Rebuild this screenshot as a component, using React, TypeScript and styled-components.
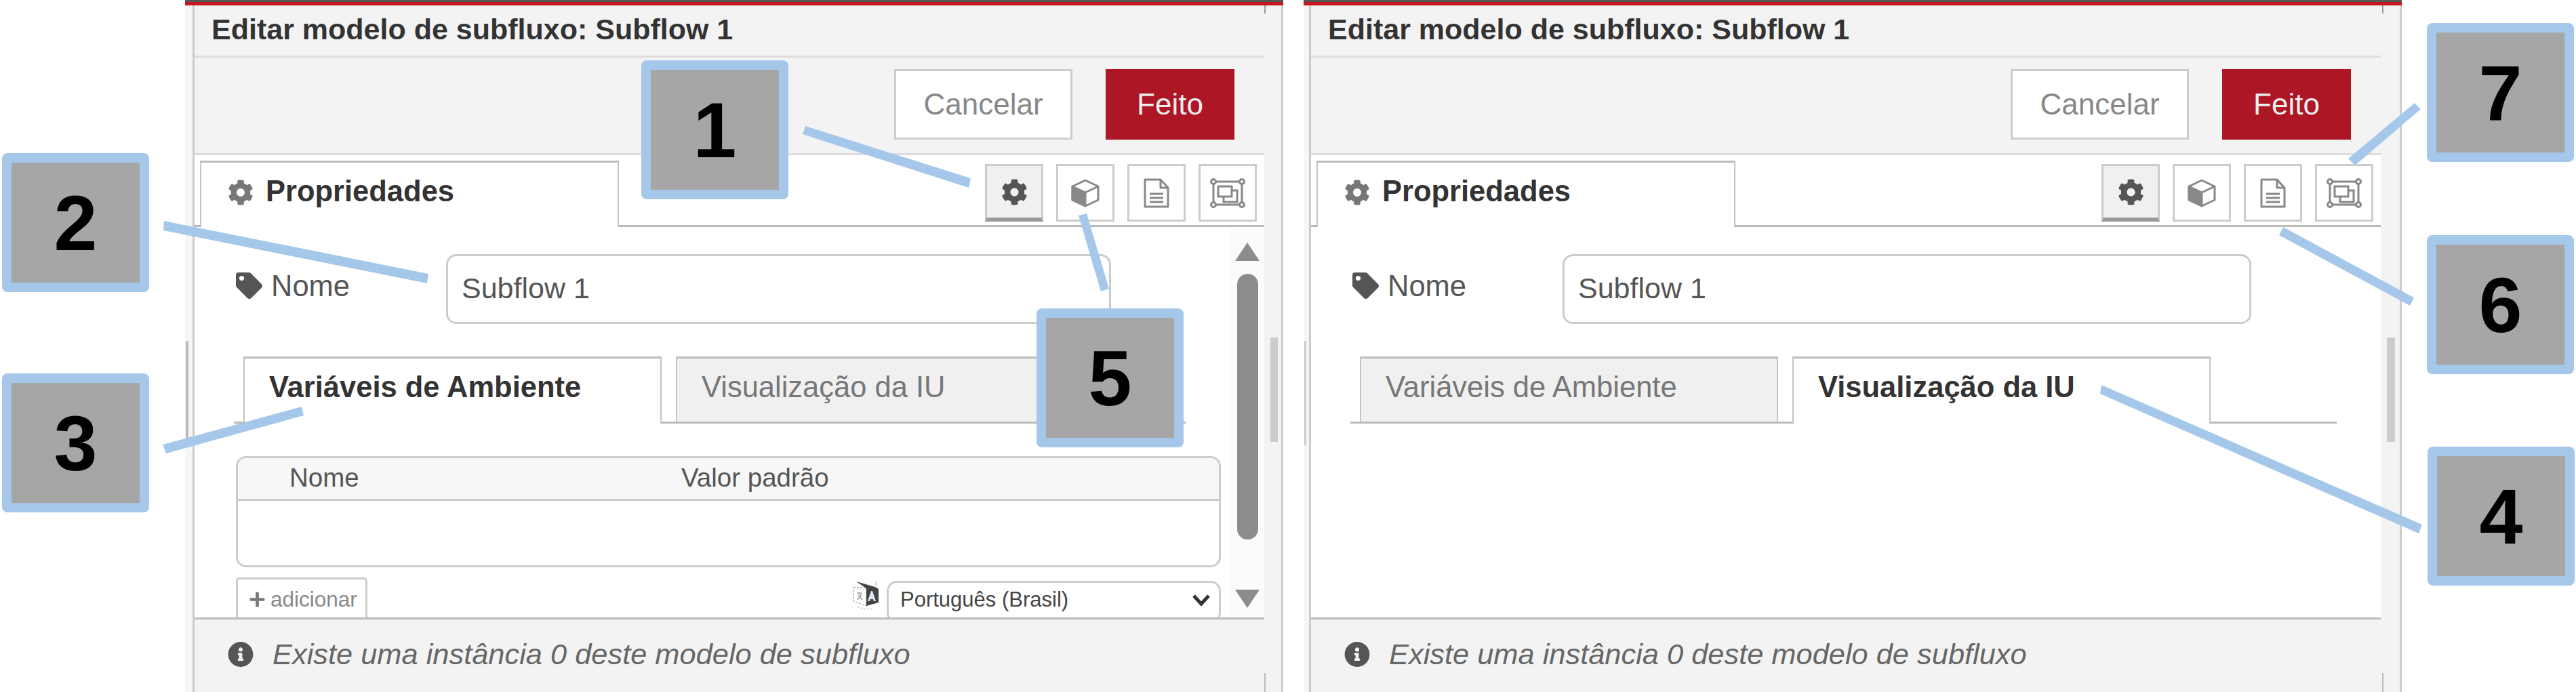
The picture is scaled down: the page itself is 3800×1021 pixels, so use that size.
import React from 'react';
import styled, { createGlobalStyle } from 'styled-components';
import { FaCog, FaTag, FaInfoCircle, FaPlus } from 'react-icons/fa';

const Global = createGlobalStyle`
  html, body { margin: 0; padding: 0; background: #fff; }
  body { font-family: "Liberation Sans", Arial, sans-serif; }
`;

const Page = styled.div`
  position: relative;
  width: 3800px;
  height: 1021px;
  overflow: hidden;
  background: #fff;
  display: flex;
  gap: 30px;
  padding-left: 273px;
  box-sizing: border-box;
`;

const Panel = styled.section`
  width: 1620px;
  height: 1021px;
  display: flex;
  flex-direction: column;
  flex: none;
`;

const TopBar = styled.div`
  height: 8px;
  flex: none;
  background: linear-gradient(#555 0 3px, #c4161c 3px 8px);
`;

const PanelBody = styled.div`
  flex: 1;
  display: flex;
  min-height: 0;
  background: #f3f3f3;
  border-right: 3px solid #ccc;
`;

const Gutter = styled.div<{ $w: number }>`
  width: ${p => p.$w}px;
  flex: none;
  box-sizing: border-box;
  background: #f6f6f6;
  border-right: 3px solid #ccc;
`;

const Main = styled.div`
  width: 1578px;
  flex: none;
  display: flex;
  flex-direction: column;
`;

const TitleBar = styled.div`
  height: 77px;
  box-sizing: border-box;
  border-bottom: 3px solid #ddd;
  padding: 10px 0 0 25px;
  font-size: 43px;
  font-weight: 700;
  line-height: 50px;
  color: #333;
  white-space: nowrap;
`;

const ButtonBar = styled.div`
  height: 144px;
  box-sizing: border-box;
  border-bottom: 3px solid #ddd;
  padding: 17px 44px 0 0;
  display: flex;
  justify-content: flex-end;
  align-items: flex-start;
  gap: 49px;
`;

const ActionButton = styled.div<{ $primary?: boolean }>`
  width: ${p => (p.$primary ? 190 : 263)}px;
  height: 104px;
  box-sizing: border-box;
  border: 3px solid ${p => (p.$primary ? '#ad1625' : '#ccc')};
  background: ${p => (p.$primary ? '#ad1625' : '#fff')};
  color: ${p => (p.$primary ? '#eee' : '#888')};
  font-size: 44px;
  display: flex;
  align-items: center;
  justify-content: center;
`;

const TabBar = styled.div`
  height: 106px;
  box-sizing: border-box;
  border-bottom: 3px solid #bbb;
  background: #fff;
  padding: 8px 11px 0 8px;
  display: flex;
  justify-content: space-between;
  align-items: flex-start;
`;

const MainTab = styled.div`
  width: 618px;
  height: 98px;
  box-sizing: border-box;
  border: 2px solid #c4c4c4;
  border-top: 3px solid #bbb;
  border-bottom: none;
  background: #fff;
  padding: 23px 0 0 39px;
  display: flex;
  align-items: flex-start;
  gap: 18px;
  font-size: 43.5px;
  line-height: 38px;
  font-weight: 700;
  color: #333;
  svg { color: #777; width: 38px; height: 38px; flex: none; margin-top: 2px; }
`;

const IconTabs = styled.div`
  display: flex;
  gap: 19px;
  margin-top: 5px;
`;

const IconTab = styled.div<{ $active?: boolean }>`
  width: 86px;
  height: 85px;
  box-sizing: border-box;
  border: 3px solid #ccc;
  border-bottom: ${p => (p.$active ? '6px solid #999' : '3px solid #ccc')};
  background: ${p => (p.$active ? '#f0f0f0' : '#fff')};
  display: flex;
  align-items: center;
  justify-content: center;
  color: #555;
`;

const Content = styled.div`
  height: 576px;
  flex: none;
  display: flex;
  background: #fff;
  overflow: hidden;
`;

const Form = styled.div`
  flex: 1;
  min-width: 0;
  padding: 40px 0 0 61px;
`;

const NameRow = styled.div`
  display: flex;
  align-items: flex-start;
`;

const NameLabel = styled.label`
  width: 310px;
  flex: none;
  display: flex;
  align-items: flex-start;
  gap: 13px;
  padding-top: 27px;
  font-size: 43.5px;
  line-height: 40px;
  color: #555;
  svg { width: 39px; height: 39px; flex: none; }
`;

const NameInput = styled.div<{ $w: number }>`
  width: ${p => p.$w}px;
  height: 103px;
  box-sizing: border-box;
  border: 3px solid #ccc;
  border-radius: 15px;
  background: #fff;
  padding: 0 0 2px 20px;
  display: flex;
  align-items: center;
  font-size: 43px;
  color: #555;
`;

const SubTabBar = styled.div<{ $w: number }>`
  width: ${p => p.$w}px;
  height: 99px;
  box-sizing: border-box;
  margin: 48px 0 0 -3px;
  padding-left: 14px;
  border-bottom: 3px solid #bbb;
  display: flex;
  gap: 21px;
`;

const SubTab = styled.div<{ $active?: boolean }>`
  width: 617px;
  height: ${p => (p.$active ? 99 : 96)}px;
  box-sizing: border-box;
  border: 2px solid #c4c4c4;
  border-top: 3px solid #bbb;
  border-bottom: none;
  background: ${p => (p.$active ? '#fff' : '#f0f0f0')};
  color: ${p => (p.$active ? '#333' : '#777')};
  font-weight: ${p => (p.$active ? 700 : 400)};
  font-size: 43.5px;
  line-height: 46px;
  padding: 19px 0 0 36px;
  white-space: nowrap;
`;

const EnvTable = styled.div`
  width: 1453px;
  height: 164px;
  box-sizing: border-box;
  margin: 48px 0 0 0;
  border: 3px solid #ccc;
  border-radius: 15px;
  overflow: hidden;
`;

const EnvHead = styled.div`
  height: 63px;
  box-sizing: border-box;
  background: #f7f7f7;
  border-bottom: 3px solid #ccc;
  display: grid;
  grid-template-columns: 578px 1fr;
  padding-left: 76px;
  font-size: 38.5px;
  line-height: 58px;
  color: #555;
`;

const TableFooter = styled.div`
  width: 1453px;
  margin-top: 15px;
  display: flex;
  justify-content: space-between;
  align-items: flex-start;
`;

const AddButton = styled.div`
  width: 194px;
  height: 66px;
  box-sizing: border-box;
  border: 3px solid #ccc;
  border-radius: 5px;
  display: flex;
  align-items: flex-start;
  padding: 11px 0 0 16px;
  gap: 7px;
  font-size: 31.5px;
  line-height: 36px;
  color: #888;
  svg { width: 25px; height: 25px; margin-top: 6px; flex: none; color: #777; }
`;

const LocaleGroup = styled.div`
  display: flex;
  align-items: flex-start;
  gap: 11px;
  margin-top: 5px;
`;

const LocaleSelect = styled.div`
  width: 493px;
  height: 62px;
  box-sizing: border-box;
  border: 3px solid #ccc;
  border-radius: 15px;
  padding: 0 12px 6px 17px;
  display: flex;
  align-items: center;
  justify-content: space-between;
  font-size: 31px;
  color: #444;
`;

const ScrollRail = styled.div`
  width: 50px;
  flex: none;
  background: #fbfbfb;
  display: flex;
  flex-direction: column;
  align-items: center;
  padding-top: 23px;
  box-sizing: border-box;
`;

const ScrollThumb = styled.div`
  width: 31px;
  height: 392px;
  margin: 19px 0 74px;
  border-radius: 16px;
  background: #8c8c8c;
`;

const Footer = styled.div`
  flex: 1;
  box-sizing: border-box;
  border-top: 3px solid #bbb;
  padding: 0 0 4px 49px;
  display: flex;
  align-items: center;
  gap: 28px;
  font-size: 43.4px;
  font-style: italic;
  color: #666;
  white-space: nowrap;
  svg { width: 38px; height: 39px; color: #555; flex: none; }
`;

/* Stray marks of the underlying page that lie over the panels */
const Mark = styled.div<{ $x: number; $y: number; $w: number; $h: number; $c: string }>`
  position: absolute;
  left: ${p => p.$x}px;
  top: ${p => p.$y}px;
  width: ${p => p.$w}px;
  height: ${p => p.$h}px;
  background: ${p => p.$c};
`;

const Callout = styled.div<{ $x: number; $y: number }>`
  position: absolute;
  left: ${p => p.$x}px;
  top: ${p => p.$y}px;
  width: 217px;
  height: 205px;
  box-sizing: border-box;
  border: 14px solid #a5c8ea;
  border-radius: 8px;
  background: #a6a6a6;
  background-clip: padding-box;
  display: flex;
  align-items: center;
  justify-content: center;
  font-size: 115px;
  font-weight: 700;
  color: #000;
`;

const Leaders = styled.svg`
  position: absolute;
  left: 0;
  top: 0;
  width: 3800px;
  height: 1021px;
  pointer-events: none;
`;

const CubeIcon = () => (
  <svg width="44" height="42" viewBox="0 0 44 42" fill="none" stroke="#888" strokeWidth="3" strokeLinejoin="round">
    <path d="M22 2 41 11v20L22 40 3 31V11z" fill="#fff" />
    <path d="M3 11l19 9v20L3 31z" fill="#888" />
    <path d="M22 20l19-9" />
  </svg>
);

const DocIcon = () => (
  <svg width="38" height="44" viewBox="0 0 38 44" fill="none" stroke="#888" strokeWidth="3" strokeLinejoin="round">
    <path d="M2 2h23l11 12v28H2z" />
    <path d="M25 2v12h11" />
    <path d="M9 23h20M9 29h20M9 35h20" />
  </svg>
);

const FrameIcon = () => (
  <svg width="52" height="44" viewBox="0 0 52 44" fill="none" stroke="#888" strokeWidth="3">
    <path d="M7 5h38M7 39h38M5 7v30M47 7v30" />
    <circle cx="5" cy="5" r="3.5" fill="#fff" />
    <circle cx="47" cy="5" r="3.5" fill="#fff" />
    <circle cx="5" cy="39" r="3.5" fill="#fff" />
    <circle cx="47" cy="39" r="3.5" fill="#fff" />
    <rect x="12" y="12" width="20" height="15" fill="#fff" />
    <path d="M32 18h8v17H20v-8" />
  </svg>
);

const LanguageIcon = () => (
  <svg width="39" height="44" viewBox="0 0 39 44" style={{ flex: 'none' }}>
    <path d="M1 10h19v27L1 30z" fill="#fff" stroke="#aaa" strokeWidth="1.5" strokeDasharray="3 2" />
    <path d="M5 1l28 8 5 3v20l-18 5V11z" fill="#444" />
    <path d="M34 1v6" stroke="#bbb" strokeWidth="1.5" />
    <path d="M27 15l-5 15h3l1-3h4l1 3h3l-5-15z" fill="#dfe6f2" />
    <path d="M6 18h8M10 17v3M7 28l6-8M8 21l6 7" stroke="#999" strokeWidth="1.5" fill="none" />
    <path d="M7 38q12 6 24 2" stroke="#ccc" strokeWidth="1.5" strokeDasharray="3 2" fill="none" />
  </svg>
);

const Chevron = () => (
  <svg width="28" height="20" viewBox="0 0 28 20" fill="none" stroke="#333" strokeWidth="5">
    <path d="M3 4l11 12L25 4" />
  </svg>
);

const Triangle = ({ down }: { down?: boolean }) => (
  <svg width="36" height="27" viewBox="0 0 36 27" fill="#8c8c8c">
    <path d={down ? 'M0 0h36L18 27z' : 'M18 0l18 27H0z'} />
  </svg>
);

const IconStrip = () => (
  <IconTabs>
    <IconTab $active><FaCog size={39} /></IconTab>
    <IconTab><CubeIcon /></IconTab>
    <IconTab><DocIcon /></IconTab>
    <IconTab><FrameIcon /></IconTab>
  </IconTabs>
);

const Shell = ({ gutter, children }: { gutter: number; children?: React.ReactNode }) => (
  <Panel>
    <TopBar />
    <PanelBody>
      <Gutter $w={gutter} />
      <Main>
        <TitleBar>Editar modelo de subfluxo: Subflow 1</TitleBar>
        <ButtonBar>
          <ActionButton>Cancelar</ActionButton>
          <ActionButton $primary>Feito</ActionButton>
        </ButtonBar>
        <TabBar>
          <MainTab><FaCog />Propriedades</MainTab>
          <IconStrip />
        </TabBar>
        <Content>{children}</Content>
        <Footer><FaInfoCircle />Existe uma instância 0 deste modelo de subfluxo</Footer>
      </Main>
    </PanelBody>
  </Panel>
);

const NameField = ({ w }: { w: number }) => (
  <NameRow>
    <NameLabel><FaTag />Nome</NameLabel>
    <NameInput $w={w}>Subflow 1</NameInput>
  </NameRow>
);

const callouts = [
  { n: 1, x: 946, y: 89 },
  { n: 2, x: 3, y: 226 },
  { n: 3, x: 3, y: 551 },
  { n: 4, x: 3581, y: 659 },
  { n: 5, x: 1529, y: 455 },
  { n: 6, x: 3580, y: 347 },
  { n: 7, x: 3580, y: 34 },
];

const leaders = [
  '242,326 632,404 630,418 241,340',
  '240,656 445,600 448,613 245,669',
  '1188,186 1432,263 1429,277 1184,198',
  '1591,318 1603,315 1636,426 1624,430',
  '3562,152 3571,161 3474,244 3464,234',
  '3368,335 3561,439 3555,451 3362,347',
  '3100,568 3573,774 3568,787 3098,581',
];

const marks = [
  { x: 274, y: 503, w: 4, h: 154, c: '#bbb' },
  { x: 1924, y: 503, w: 3, h: 154, c: '#ccc' },
  { x: 1874, y: 498, w: 11, h: 154, c: '#ccc' },
  { x: 3521, y: 498, w: 12, h: 154, c: '#ccc' },
  { x: 1865, y: 8, w: 2, h: 12, c: '#999' },
  { x: 1865, y: 993, w: 2, h: 28, c: '#bbb' },
  { x: 3514, y: 8, w: 2, h: 12, c: '#999' },
  { x: 3514, y: 993, w: 2, h: 28, c: '#bbb' },
];

export default function App() {
  return (
    <>
      <Global />
      <Page>
        <Shell gutter={14}>
          <Form>
            <NameField w={981} />
            <SubTabBar $w={1404}>
              <SubTab $active>Variáveis de Ambiente</SubTab>
              <SubTab>Visualização da IU</SubTab>
            </SubTabBar>
            <EnvTable>
              <EnvHead><span>Nome</span><span>Valor padrão</span></EnvHead>
            </EnvTable>
            <TableFooter>
              <AddButton><FaPlus />adicionar</AddButton>
              <LocaleGroup>
                <LanguageIcon />
                <LocaleSelect>Português (Brasil)<Chevron /></LocaleSelect>
              </LocaleGroup>
            </TableFooter>
          </Form>
          <ScrollRail>
            <Triangle />
            <ScrollThumb />
            <Triangle down />
          </ScrollRail>
        </Shell>
        <Shell gutter={11}>
          <Form>
            <NameField w={1016} />
            <SubTabBar $w={1455}>
              <SubTab>Variáveis de Ambiente</SubTab>
              <SubTab $active>Visualização da IU</SubTab>
            </SubTabBar>
          </Form>
        </Shell>
        {marks.map(m => <Mark key={`${m.x}-${m.y}`} $x={m.x} $y={m.y} $w={m.w} $h={m.h} $c={m.c} />)}
        <Leaders viewBox="0 0 3800 1021">
          {leaders.map(pts => <polygon key={pts} points={pts} fill="#a5c8ea" />)}
        </Leaders>
        {callouts.map(c => <Callout key={c.n} $x={c.x} $y={c.y}>{c.n}</Callout>)}
      </Page>
    </>
  );
}
